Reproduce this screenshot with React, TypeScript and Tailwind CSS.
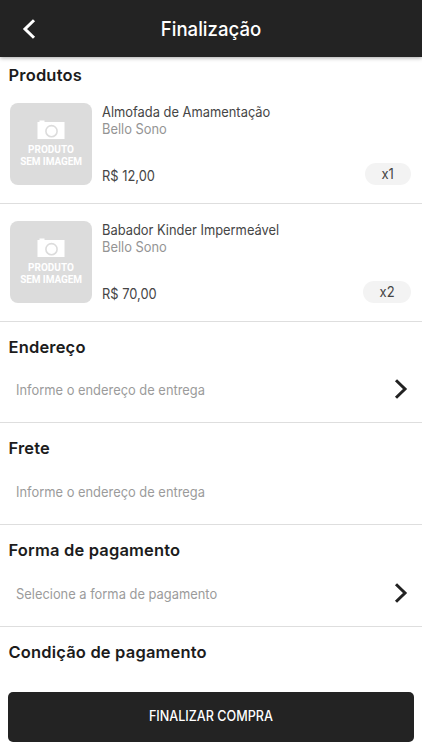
import { clsx } from "clsx";

interface Product {
  name: string;
  brand: string;
  price: string;
  quantity: number;
}

interface Section {
  title: string;
  hint: string;
  hasArrow: boolean;
}

const products: Product[] = [
  { name: "Almofada de Amamentação", brand: "Bello Sono", price: "R$ 12,00", quantity: 1 },
  { name: "Babador Kinder Impermeável", brand: "Bello Sono", price: "R$ 70,00", quantity: 2 },
];

const sections: Section[] = [
  { title: "Endereço", hint: "Informe o endereço de entrega", hasArrow: true },
  { title: "Frete", hint: "Informe o endereço de entrega", hasArrow: false },
  { title: "Forma de pagamento", hint: "Selecione a forma de pagamento", hasArrow: true },
];

function Heading({ children }: { children: string }) {
  return (
    <h2 className="px-[8.5px] text-[16.5px] leading-6 font-semibold tracking-[0.17px] text-[#1c1c1c]">{children}</h2>
  );
}

function NoImage() {
  return (
    <div className="flex h-[82px] w-[82px] shrink-0 flex-col items-center rounded-[8px] bg-[#dcdcdc] pt-[17px] font-['Roboto',sans-serif] font-bold text-white">
      <svg width="28" height="20" viewBox="0 0 28 20" className="shrink-0">
        <path d="M0.5 2H2.5V0.5H7.5V2H27.5V19H0.5Z" fill="#fff" />
        <circle cx="14.5" cy="11.2" r="5.6" fill="#fff" stroke="#dcdcdc" strokeWidth="1.6" />
      </svg>
      <span className="mt-[4px] text-[10px] leading-3 tracking-normal">PRODUTO</span>
      <span className="text-[10px] leading-3 tracking-[-0.1px] whitespace-nowrap">SEM IMAGEM</span>
    </div>
  );
}

function ProductRow({ product }: { product: Product }) {
  return (
    <div className="flex h-[118px] border-b border-[#dedede] pt-[17.5px] pl-[10px]">
      <NoImage />
      <div className="flex flex-1 flex-col pl-[10px] text-[14px] leading-[18px] text-[#454545]">
        <span className="origin-left scale-x-92">{product.name}</span>
        <span className="-mt-px origin-left scale-x-92 text-[#949494]">{product.brand}</span>
        <div className="mt-[25px] flex items-center justify-between pr-[11px]">
          <span className="origin-left scale-x-92 pt-[4px]">{product.price}</span>
          <span
            className={clsx(
              "flex h-[22px] items-center justify-center rounded-full bg-[#f3f3f3]",
              product.quantity > 1 ? "w-[48px]" : "w-[46px]"
            )}
          >
            <span className="scale-x-93">x{product.quantity}</span>
          </span>
        </div>
      </div>
    </div>
  );
}

function SectionRow({ section }: { section: Section }) {
  return (
    <div className="h-[101.8px] border-b border-[#dedede] pt-[13px]">
      <Heading>{section.title}</Heading>
      <div className="mt-[18.9px] flex h-6 items-center justify-between pr-[14px] pl-[16px]">
        <span className="origin-left scale-x-92 text-[14px] text-[#9b9b9b]">{section.hint}</span>
        {section.hasArrow && (
          <svg width="14" height="20" viewBox="0 0 14 20" fill="none" stroke="#222" strokeWidth="3">
            <path d="M2 1.2L11 10L2 18.8" />
          </svg>
        )}
      </div>
    </div>
  );
}

export default function App() {
  return (
    <div className="flex h-[750px] w-full flex-col overflow-hidden bg-white font-['Inter',sans-serif]">
      <header className="z-10 grid h-[57px] shrink-0 grid-cols-[1fr_auto_1fr] items-center bg-[#232323] shadow-[0_1px_4px_rgba(0,0,0,0.35)]">
        <button className="pl-[22px]" aria-label="Voltar">
          <svg width="14" height="20" viewBox="0 0 14 20" fill="none" stroke="#fff" strokeWidth="3">
            <path d="M12 1.2L3 10L12 18.8" />
          </svg>
        </button>
        <h1 className="scale-x-93 text-[20px] leading-6 font-medium text-white">Finalização</h1>
      </header>

      <main className="min-h-0 flex-1 overflow-hidden">
        <div className="h-[28.6px] pt-[6px]">
          <Heading>Produtos</Heading>
        </div>
        {products.map((product) => (
          <ProductRow key={product.name} product={product} />
        ))}
        {sections.map((section) => (
          <SectionRow key={section.title} section={section} />
        ))}
        <div className="pt-[13px]">
          <Heading>Condição de pagamento</Heading>
        </div>
      </main>

      <footer className="shrink-0 px-[8px] pb-[8.5px]">
        <button className="flex h-[50px] w-full items-center justify-center rounded-[5px] bg-[#232323] pb-[2px] text-white">
          <span className="scale-x-90 text-[14px] font-medium">FINALIZAR COMPRA</span>
        </button>
      </footer>
    </div>
  );
}
